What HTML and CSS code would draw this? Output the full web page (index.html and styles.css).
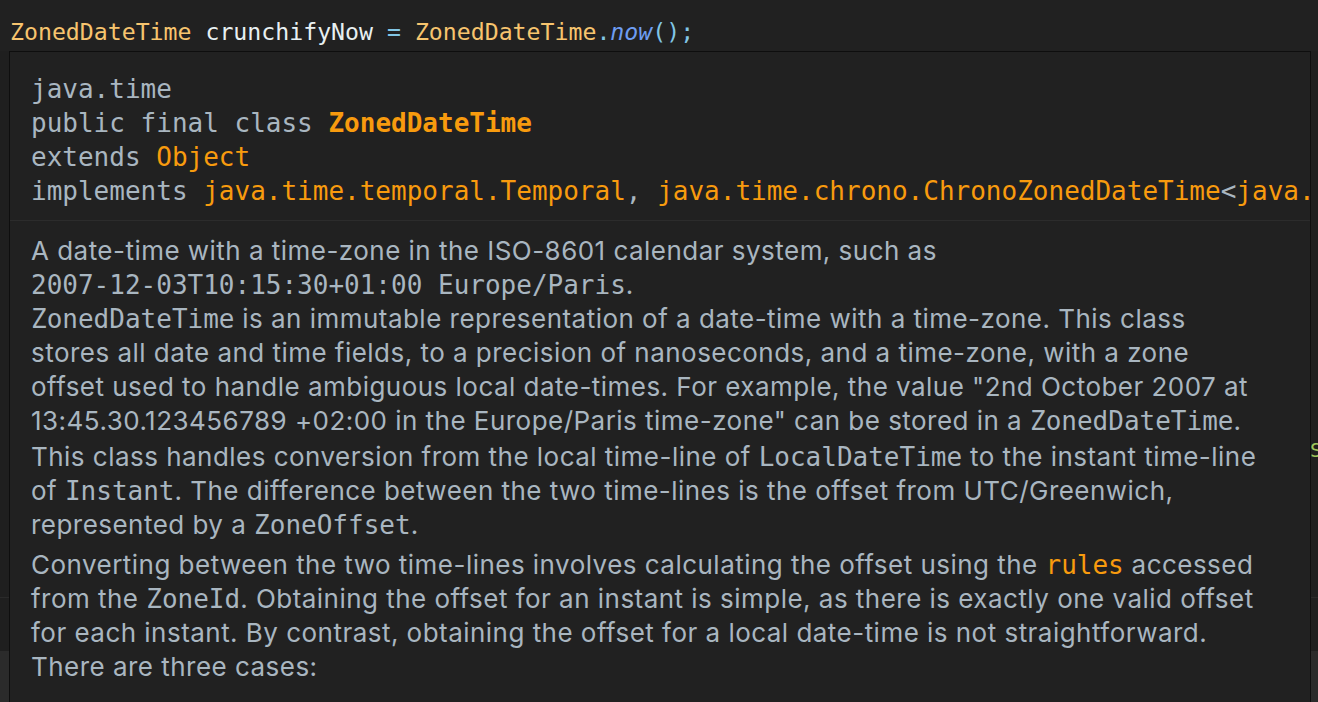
FILE: index.html
```html
<!DOCTYPE html>
<html lang="en">
<head>
<meta charset="utf-8">
<title>Quick documentation</title>
<link rel="stylesheet" href="styles.css">
</head>
<body>
<div class="editor">
  <div class="code-line"><span class="tk-type">ZonedDateTime</span> <span class="tk-var">crunchifyNow</span> <span class="tk-op">=</span> <span class="tk-type">ZonedDateTime</span><span class="tk-op">.</span><span class="tk-call">now</span><span class="tk-op">();</span></div>
  <div class="editor-body">
    <div class="ghost-line"><span class="tk-str">._S</span></div>
  </div>
  <div class="editor-tail"></div>
  <div class="bottom-panel"></div>
</div>

<div class="doc-popup">
  <div class="doc-header">
    <div class="hdr-line">java.time</div>
    <div class="hdr-line">public final class <b class="link strong">ZonedDateTime</b></div>
    <div class="hdr-line">extends <span class="link">Object</span></div>
    <div class="hdr-line">implements <span class="link">java.time.temporal.Temporal</span>, <span class="link">java.time.chrono.ChronoZonedDateTime</span>&lt;<span class="link">java.time.LocalDate</span>&gt;, <span class="link">java.io.Serializable</span></div>
  </div>
  <div class="doc-body">
    <p class="para">A date-time with a time-zone in the ISO-8601 calendar system, such as<br><code>2007-12-03T10:15:30+01:00 Europe/Paris</code>.</p>
    <p class="para">
      <code>ZonedDateTime</code> is an immutable representation of a date-time with a time-zone. This class<br>stores all date and time fields, to a precision of nanoseconds, and a time-zone, with a zone<br>offset used to handle ambiguous local date-times. For example, the value "2nd October 2007 at<br>13:45.30.123456789 +02:00 in the Europe/Paris time-zone" can be stored in a <code>ZonedDateTime</code>.</p>
    <p class="para gap-s">This class handles conversion from the local time-line of <code>LocalDateTime</code> to the instant time-line<br>of <code>Instant</code>. The difference between the two time-lines is the offset from UTC/Greenwich,<br>represented by a <code>ZoneOffset</code>.</p>
    <p class="para gap-l">Converting between the two time-lines involves calculating the offset using the <code class="link">rules</code> accessed<br>from the <code>ZoneId</code>. Obtaining the offset for an instant is simple, as there is exactly one valid offset<br>for each instant. By contrast, obtaining the offset for a local date-time is not straightforward.<br>There are three cases:</p>
  </div>
</div>
</body>
</html>
```

FILE: styles.css
```css
html, body {
  margin: 0;
  padding: 0;
  height: 100%;
  overflow: hidden;
  background: #212121;
}

body {
  position: relative;
  font-family: "DejaVu Sans Mono", "Liberation Mono", monospace;
}

.editor {
  display: flex;
  flex-direction: column;
  height: 702px;
}

.code-line {
  padding: 15px 0 0 10px;
  height: 36px;
  line-height: 34px;
  font-size: 23.2px;
  white-space: nowrap;
  color: #e6eef0;
}

.tk-type { color: #f7c46e; }
.tk-var { color: #e8f0f2; }
.tk-op { color: #82c6e6; }
.tk-call { color: #6e9df2; font-style: italic; }
.tk-str { color: #9fc55c; }

.editor-body {
  height: 546px;
  background: #1f1f1f;
  padding-top: 387px;
  box-sizing: border-box;
}

.ghost-line {
  display: flex;
  justify-content: flex-end;
  height: 24px;
  line-height: 24px;
  font-size: 20px;
  overflow: hidden;
  margin-right: -4px;
}

.editor-tail {
  height: 53px;
  border-top: 1px solid #2a2a2a;
  background: #1f1f1f;
}

.bottom-panel {
  flex: 1;
  background: #2b2b2b;
}

/* Quick documentation popup (overlay) */
.doc-popup {
  position: absolute;
  left: 9px;
  top: 51px;
  width: 1300px;
  height: 700px;
  background: #212121;
  border: 1px solid #0e0e0e;
  overflow: hidden;
}

.doc-header {
  padding: 20px 0 12px 21px;
  border-bottom: 1px solid #2c2c2c;
  font-family: "DejaVu Sans Mono", "Liberation Mono", monospace;
  font-size: 26px;
  line-height: 34px;
  color: #a9b6c0;
  white-space: nowrap;
}

.hdr-line {
  height: 34px;
}

.link {
  color: #f89b0e;
}

.strong {
  font-weight: bold;
}

.doc-body {
  padding: 13px 0 0 21px;
  font-family: Inter, "Noto Sans", sans-serif;
  font-size: 26px;
  letter-spacing: 0.47px;
  line-height: 34px;
  color: #a9b6c0;
  white-space: nowrap;
}

.para {
  margin: 0;
}

.para.gap-s {
  margin-top: 2px;
}

.para.gap-l {
  margin-top: 6px;
}

code {
  font-family: "DejaVu Sans Mono", "Liberation Mono", monospace;
  font-size: 26px;
  letter-spacing: 0;
  line-height: 1;
}

code.link {
  color: #f89b0e;
}
```
